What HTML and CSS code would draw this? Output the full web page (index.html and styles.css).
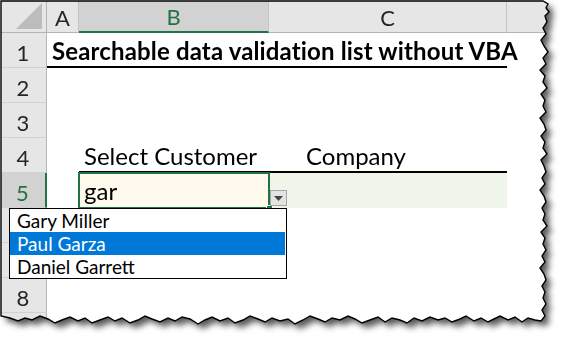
FILE: index.html
```html
<!DOCTYPE html>
<html>
<head>
  <title>Searchable data validation list</title>
  <link rel="stylesheet" href="styles.css">
</head>
<body>
  <svg class="defs" width="0" height="0">
    <defs>
      <polygon id="torn-shape" points="1,1 543,1 548,4 546,8 549,12 545,16 547,22 543,28 546,34 541,40 544,46 548,52 543,58 546,64 540,70 545,76 543,82 547,88 541,94 545,100 543,106 546,112 540,118 544,124 546,130 541,136 545,142 543,148 547,154 541,160 544,166 546,172 542,178 545,184 540,190 544,196 546,202 542,208 545,214 543,220 547,226 541,232 545,238 543,244 546,250 542,256 545,262 540,268 544,274 546,280 542,286 545,292 543,298 546,304 542,310 545,316 541,321 535,320 528,318 522,322 515,317 508,320 500,316 494,319 488,322 481,318 474,321 466,316 460,319 452,322 445,318 438,320 430,317 422,321 414,318 407,323 400,320 392,318 385,322 378,317 370,320 362,323 355,319 348,316 340,320 332,318 325,322 318,319 310,316 303,320 295,324 288,319 280,321 272,318 265,322 258,319 250,316 243,320 235,323 228,318 220,321 212,317 205,320 198,324 190,319 182,317 175,321 168,318 160,322 152,319 145,316 138,320 130,323 122,318 115,321 108,317 100,320 92,323 85,318 78,321 70,317 62,320 55,323 48,319 40,316 32,320 25,318 18,321 10,318 1,316"/>
      <clipPath id="torn"><use href="#torn-shape"/></clipPath>
    </defs>
  </svg>

  <div class="page">
    <div class="frame">
      <div class="sheet">
        <!-- column headers -->
        <div class="hd corner">
          <svg width="26" height="26" viewBox="0 0 26 26"><polygon points="26,0 26,26 0,26" fill="#bcbcbc"/></svg>
        </div>
        <div class="hd col">A</div>
        <div class="hd col active-col">B</div>
        <div class="hd col">C</div>
        <div class="hd col"></div>

        <!-- row 1 -->
        <div class="hd row">1</div>
        <div class="cell title">Searchable data validation list without VBA</div>
        <div class="cell"></div>

        <!-- row 2 -->
        <div class="hd row">2</div>
        <div class="cell"></div><div class="cell"></div><div class="cell"></div><div class="cell"></div>

        <!-- row 3 -->
        <div class="hd row">3</div>
        <div class="cell"></div><div class="cell"></div><div class="cell"></div><div class="cell"></div>

        <!-- row 4 -->
        <div class="hd row">4</div>
        <div class="cell"></div>
        <div class="cell label underline">Select Customer</div>
        <div class="cell label underline company">Company</div>
        <div class="cell"></div>

        <!-- row 5 -->
        <div class="hd row active-row">5</div>
        <div class="cell"></div>
        <div class="cell label input selected">gar</div>
        <div class="cell green-fill"></div>
        <div class="cell"></div>

        <!-- rows 6-9 (6 and 7 sit under the list) -->
        <div class="hd row"></div>
        <div class="cell"></div><div class="cell"></div><div class="cell"></div><div class="cell"></div>
        <div class="hd row"></div>
        <div class="cell"></div><div class="cell"></div><div class="cell"></div><div class="cell"></div>
        <div class="hd row">8</div>
        <div class="cell"></div><div class="cell"></div><div class="cell"></div><div class="cell"></div>
        <div class="hd row">9</div>
        <div class="cell"></div><div class="cell"></div><div class="cell"></div><div class="cell"></div>

        <!-- validation dropdown -->
        <div class="drop-btn">
          <svg width="9" height="5" viewBox="0 0 9 5"><polygon points="0,0 9,0 4.5,5" fill="#444"/></svg>
        </div>
        <ul class="drop-list">
          <li>Gary Miller</li>
          <li class="hi">Paul Garza</li>
          <li>Daniel Garrett</li>
        </ul>
      </div>
    </div>
    <svg class="edge" width="572" height="346"><use href="#torn-shape"/></svg>
  </div>
</body>
</html>
```

FILE: styles.css
```css
body {
  margin: 0;
  background-color: #fff;
  font-family: Lato, "Open Sans", sans-serif;
}

.defs {
  position: absolute;
}

.page {
  position: relative;
  width: 572px;
  height: 346px;
  overflow: hidden;
}

.frame {
  filter: drop-shadow(5px 5px 3px rgba(0, 0, 0, 0.65));
}

.sheet {
  position: relative;
  width: 560px;
  height: 340px;
  background-color: #fff;
  clip-path: url(#torn);
  display: grid;
  grid-template-columns: 47px 32px 190px 238px 1fr;
  grid-template-rows: 33px repeat(9, 35px);
}

/* torn edge outline */
.edge {
  position: absolute;
  top: 0;
  left: 0;
  fill: none;
  stroke: #000;
  stroke-width: 1.4;
}

/* headers */
.hd {
  background-color: #e6e6e6;
  color: #262626;
  font-size: 22px;
  display: flex;
  align-items: center;
  justify-content: center;
  box-sizing: border-box;
}

.hd.col {
  border-right: 1px solid #c4c4c4;
  border-bottom: 1px solid #b4b4b4;
  padding-top: 2px;
}

.hd.corner {
  border-right: 1px solid #b4b4b4;
  border-bottom: 1px solid #b4b4b4;
  justify-content: flex-end;
  align-items: flex-end;
  padding: 0 4px 3px 0;
}

.hd.row {
  border-right: 1px solid #b4b4b4;
  border-bottom: 1px solid #d2d2d2;
  padding-top: 4px;
}

.hd.active-col {
  background-color: #d2d2d2;
  color: #217346;
  border-bottom: 2px solid #217346;
}

.hd.active-row {
  background-color: #d2d2d2;
  color: #217346;
  border-right: 2px solid #217346;
}

/* cells */
.cell {
  box-sizing: border-box;
  white-space: nowrap;
  display: flex;
  align-items: flex-end;
  padding: 0 0 3px 5px;
  font-size: 24px;
  color: #000;
}

.title {
  grid-column: 2 / 5;
  font-weight: bold;
  letter-spacing: 0.15px;
  border-bottom: 2px solid #000;
  padding-bottom: 1px;
  overflow: visible;
}

.underline {
  border-bottom: 2px solid #000;
  padding-bottom: 1px;
}

.company {
  padding-left: 37px;
}

.input {
  background-color: #fffaec;
}

.green-fill {
  background-color: #eff5e9;
}

.selected {
  position: relative;
  outline: 2px solid #217346;
  outline-offset: -1px;
}

.selected::after {
  content: "";
  position: absolute;
  right: -4px;
  bottom: -4px;
  width: 5px;
  height: 5px;
  background-color: #217346;
  border: 1px solid #fff;
}

/* data validation dropdown */
.drop-btn {
  position: absolute;
  left: 270px;
  top: 190px;
  width: 17px;
  height: 16px;
  box-sizing: border-box;
  background-color: #e3e3e3;
  border: 1px solid #a6a6a6;
  display: flex;
  align-items: center;
  justify-content: center;
}

.drop-list {
  position: absolute;
  left: 9px;
  top: 208px;
  width: 278px;
  height: 71px;
  box-sizing: border-box;
  margin: 0;
  padding: 0 1px 0 0;
  list-style: none;
  background-color: #fff;
  border: 1px solid #000;
}

.drop-list li {
  height: 23px;
  line-height: 23px;
  padding-left: 7px;
  font-size: 19px;
  color: #000;
}

.drop-list li.hi {
  background-color: #0078d7;
  color: #fff;
}
```
